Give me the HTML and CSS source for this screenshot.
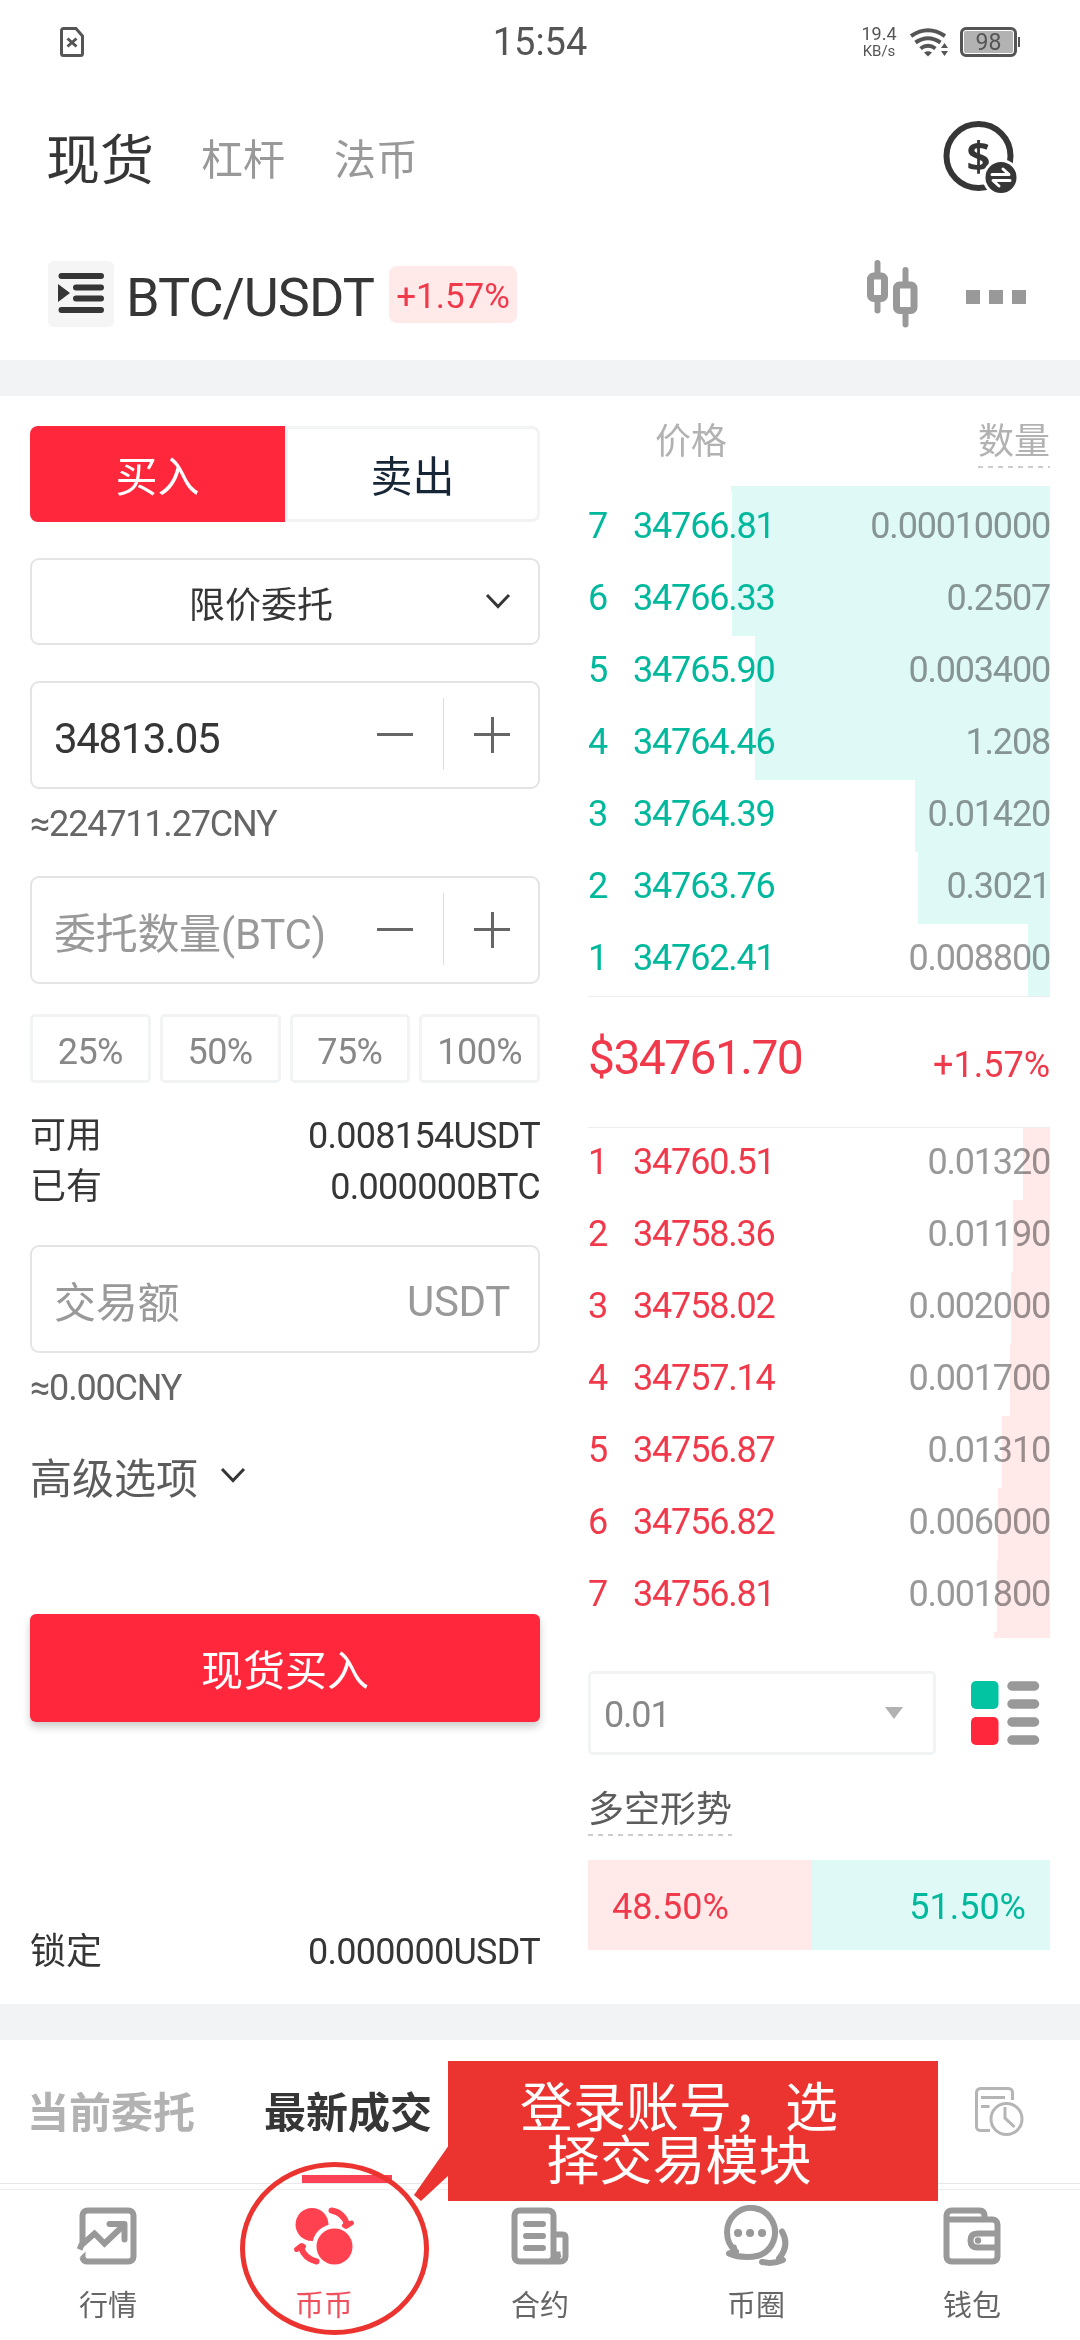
FILE: index.html
```html
<!DOCTYPE html>
<html lang="zh-CN">
  <head>
    <meta charset="utf-8">
    <title>现货交易</title>
    <meta name="viewport" content="width=device-width">
    <link rel="stylesheet" href="styles.css">
  </head>
  <body>
    <div class="status">
      <svg class="sim" width="24" height="30" viewBox="0 0 24 30" fill="none" stroke="#555" stroke-width="3">
        <path d="M3.5 1.5H16L22.500 9V26.500A2 2 0 0 1 20.500 28.500H3.500A2 2 0 0 1 1.500 26.500V3.500A2 2 0 0 1 3.500 1.500Z"/>
        <path d="M7.500 11.500L16.500 19.500M16.500 11.500L7.500 19.500"/>
      </svg>
      <div class="clock">15:54</div>
      <div class="speed"><b>19.4</b><span>KB/s</span></div>
      <svg class="wifi" width="39" height="29" viewBox="0 0 39 29" fill="none" stroke="#555" stroke-width="4">
        <path d="M1 8Q18 -3.500 35 8M5.500 14.500Q18 6 30.500 14.500M10.500 20.500Q18 15 25.500 20.500"/>
        <path d="M14 24.500Q18 22 22 24.500L18 28.500Z" fill="#555" stroke="none"/>
        <path d="M31 20L34.500 15L38 20ZM31 23H38L34.500 28Z" fill="#555" stroke="none"/>
      </svg>
      <div class="battery">98</div>
    </div>

    <div class="market-tabs">
      <span class="on">现货</span>
      <span>杠杆</span>
      <span>法币</span>
      <svg width="76" height="76" viewBox="0 0 76 76">
        <circle cx="35.500" cy="36" r="32" fill="none" stroke="#363636" stroke-width="6"/>
        <text class="dollar" x="35.500" y="51" text-anchor="middle">$</text>
        <circle cx="58" cy="57.500" r="18.500" fill="#fff"/>
        <circle cx="58" cy="57.500" r="15.500" fill="#363636"/>
        <path d="M49 54.500H66L60 49M67 60.500H50L56 66" fill="none" stroke="#fff" stroke-width="3" stroke-linecap="round" stroke-linejoin="round"/>
      </svg>
    </div>

    <div class="pair">
      <span class="menu">
        <svg width="66" height="66" viewBox="0 0 66 66" fill="none" stroke="#363636" stroke-width="6" stroke-linecap="round">
          <path d="M13.500 15H53M28 26.500H53M28 37.500H53M13.500 49H53"/>
          <path d="M10 23L22 32L10 41Z" fill="#363636" stroke="none"/>
        </svg>
      </span>
      <h1>BTC/USDT</h1>
      <span class="change">+1.57%</span>
      <svg class="candles" width="52" height="68" viewBox="0 0 52 68" fill="none" stroke="#999" stroke-width="7">
        <rect x="3.500" y="16" width="14" height="22.500" rx="3"/>
        <rect x="29.500" y="25" width="17.500" height="25.500" rx="3"/>
        <path d="M10.500 3V13M10.500 41V50.500M38.500 10V22M38.500 53V64.500" stroke-width="6" stroke-linecap="round"/>
      </svg>
      <span class="more"><i></i><i></i><i></i></span>
    </div>

    <div class="trade">
      <div class="order">
        <div class="side">
          <button class="buy">买入</button>
          <button class="sell">卖出</button>
        </div>
        <div class="box type">
          <span>限价委托</span>
          <svg width="26" height="17" viewBox="0 0 26 17"><path d="M2 2L13 13.500L24 2"/></svg>
        </div>
        <div class="box price">
          <span class="num val">34813.05</span>
          <span class="step"><i class="minus"></i></span>
          <span class="step plus"><i class="minus"></i></span>
        </div>
        <p class="approx num">≈224711.27CNY</p>
        <div class="box amount">
          <span class="val hint">委托数量(BTC)</span>
          <span class="step"><i class="minus"></i></span>
          <span class="step plus"><i class="minus"></i></span>
        </div>
        <div class="percent">
          <span>25%</span><span>50%</span><span>75%</span><span>100%</span>
        </div>
        <dl class="balance">
          <dt>可用</dt><dd>0.008154USDT</dd>
          <dt>已有</dt><dd>0.000000BTC</dd>
        </dl>
        <div class="box total">
          <span class="val hint">交易额</span>
          <span class="hint unit">USDT</span>
        </div>
        <p class="approx num">≈0.00CNY</p>
        <div class="advanced">
          高级选项
          <svg width="26" height="17" viewBox="0 0 26 17"><path d="M2 2L13 13.500L24 2"/></svg>
        </div>
        <button class="submit">现货买入</button>
        <dl class="balance locked">
          <dt>锁定</dt><dd>0.000000USDT</dd>
        </dl>
      </div>

      <div class="book">
        <div class="book-head"><span>价格</span><span class="dashed">数量</span></div>
        <ul class="asks num">
          <li class="cut"><i style="width:319px"></i></li>
          <li><i style="width:318px"></i><b>7</b><em>34766.81</em><span>0.00010000</span></li>
          <li><i style="width:318px"></i><b>6</b><em>34766.33</em><span>0.2507</span></li>
          <li><i style="width:295px"></i><b>5</b><em>34765.90</em><span>0.003400</span></li>
          <li><i style="width:295px"></i><b>4</b><em>34764.46</em><span>1.208</span></li>
          <li><i style="width:135px"></i><b>3</b><em>34764.39</em><span>0.01420</span></li>
          <li><i style="width:132px"></i><b>2</b><em>34763.76</em><span>0.3021</span></li>
          <li><i style="width:22px"></i><b>1</b><em>34762.41</em><span>0.008800</span></li>
        </ul>
        <div class="last"><strong class="num">$34761.70</strong><span>+1.57%</span></div>
        <ul class="bids num">
          <li><i style="width:27px"></i><b>1</b><em>34760.51</em><span>0.01320</span></li>
          <li><i style="width:37px"></i><b>2</b><em>34758.36</em><span>0.01190</span></li>
          <li><i style="width:39px"></i><b>3</b><em>34758.02</em><span>0.002000</span></li>
          <li><i style="width:40px"></i><b>4</b><em>34757.14</em><span>0.001700</span></li>
          <li><i style="width:48px"></i><b>5</b><em>34756.87</em><span>0.01310</span></li>
          <li><i style="width:52px"></i><b>6</b><em>34756.82</em><span>0.006000</span></li>
          <li><i style="width:53px"></i><b>7</b><em>34756.81</em><span>0.001800</span></li>
          <li class="cut"><i style="width:56px"></i></li>
        </ul>
        <div class="depth">
          <span class="merge num">0.01</span>
          <svg width="69" height="64" viewBox="0 0 69 64">
            <rect width="27.500" height="28" rx="5" fill="#02c4a3"/>
            <rect y="36" width="27.500" height="28" rx="5" fill="#ff273c"/>
            <path d="M41 5H63.500M41 23H63.500M41 41H63.500M41 59H63.500" stroke="#999" stroke-width="9.500" stroke-linecap="round"/>
          </svg>
        </div>
        <div class="trend-title"><span class="dashed">多空形势</span></div>
        <div class="trend">
          <span class="long" style="width:48.5%">48.50%</span>
          <span class="short" style="width:51.5%">51.50%</span>
        </div>
      </div>
    </div>

    <div class="list-tabs">
      <span>当前委托</span>
      <span class="on">最新成交</span>
      <svg width="50" height="50" viewBox="0 0 50 50" fill="none" stroke="#b5b5b5" stroke-width="3">
        <path d="M37.500 13V5.500A4 4 0 0 0 33.500 1.500H5.500A4 4 0 0 0 1.500 5.500V39.500A4 4 0 0 0 5.500 43.500H15"/>
        <path d="M6 10.500H30M6 19.500H14.500"/>
        <circle cx="31.500" cy="32" r="15.500"/>
        <path d="M30 20V31L39.500 40"/>
      </svg>
    </div>

    <div class="nav">
      <a>
        <svg width="70" height="62" viewBox="-6.500 -2.500 70 62" fill="none" stroke="#999" stroke-width="6">
          <path d="M3 37V8A5 5 0 0 1 8 3H49A5 5 0 0 1 54 8V49A5 5 0 0 1 49 54H8Q4 54 3 50"/>
          <path d="M0 42L2 37.500L15 26L25 36L44 18"/>
          <path d="M30 16.500H45V32" stroke-linecap="round" stroke-linejoin="round"/>
          <path d="M0 50L6 44V51Z" fill="#999" stroke="none"/>
        </svg>
        行情
      </a>
      <a class="on">
        <svg width="70" height="62" viewBox="-5.500 -2.500 70 62">
          <circle cx="17.500" cy="17" r="16.500" fill="#ff4150"/>
          <circle cx="40" cy="39" r="22.500" fill="#fff"/>
          <circle cx="40" cy="39" r="18" fill="#ff4150"/>
          <path d="M37 3Q49 5 52.500 17M22 54Q10 51 6.500 40" fill="none" stroke="#ff4150" stroke-width="6" stroke-linecap="round"/>
          <path d="M50 18L57 15.500L51.500 19ZM9 39L2 42L7 38Z" fill="#ff4150" stroke="#ff4150" stroke-width="5" stroke-linejoin="round"/>
        </svg>
        币币
      </a>
      <a>
        <svg width="70" height="62" viewBox="-6.500 -2.500 70 62" fill="none" stroke="#999" stroke-width="6">
          <rect x="3" y="3" width="39" height="51" rx="5"/>
          <path d="M42 27H51Q54 27 54 30V49A5 5 0 0 1 49 54H38M48 51Q46 49 46 44"/>
          <path d="M14.500 16.500H31.500M14.500 28.500H31.500M14.500 40.500H31.500" stroke-linecap="round"/>
        </svg>
        合约
      </a>
      <a>
        <svg width="70" height="62" viewBox="-2 -0.500 70 62" fill="none" stroke="#999" stroke-width="6" stroke-linecap="round" stroke-linejoin="round">
          <path d="M13 46A24 24.500 0 1 1 36 50Q20 54 6 48Q12 47 11 42"/>
          <path d="M59 26Q67 40 56 53L60 54.500Q50 59 39 56.500"/>
          <path d="M15 27.500h.1M27 27.500h.1M39 27.500h.1" stroke-width="8"/>
        </svg>
        币圈
      </a>
      <a>
        <svg width="70" height="62" viewBox="-6.500 -2.500 70 62" fill="none" stroke="#999" stroke-width="6">
          <path d="M3 12V8A5 5 0 0 1 8 3H36Q41 3 41 9M3 12H49A5 5 0 0 1 54 17V49A5 5 0 0 1 49 54H8A5 5 0 0 1 3 49Z"/>
          <path d="M54 26H34Q27 26 27 33Q27 40 34 40H54"/>
          <circle cx="34.500" cy="33" r="3.200" fill="#999" stroke="none"/>
        </svg>
        钱包
      </a>
    </div>

    <!-- guide overlay -->
    <div class="ring"></div>
    <svg class="tail" width="36" height="56" viewBox="0 0 36 56"><path d="M36 0L1 50L8 56L36 30Z"/></svg>
    <div class="tip">登录账号，选<br>择交易模块</div>
  </body>
</html>
```

FILE: styles.css
```css
* {
    box-sizing: border-box;
}
body {
    position: relative;
    width: 1080px;
    height: 2340px;
    margin: 0;
    overflow: hidden;
    background: #fff;
    color: #363636;
    font-family: Roboto, "Noto Sans CJK SC", sans-serif;
    font-size: 36px;
}
svg {
    display: block;
    flex: none;
}
ul, dl, dd, p, h1 {
    margin: 0;
    padding: 0;
    list-style: none;
}
b, em, i, strong {
    font-weight: inherit;
    font-style: normal;
}
button {
    padding: 0;
    border: 0;
    font: inherit;
    font-size: 42px;
}
.num {
    letter-spacing: -0.033em;
}

/* status bar */
.status {
    display: flex;
    align-items: center;
    height: 84px;
    padding: 0 60px;
    color: #555;
}
.clock {
    width: 100px;
    margin-left: 406px;
    text-align: center;
    font-size: 38px;
}
.speed {
    width: 38px;
    margin-left: 270px;
    text-align: center;
    white-space: nowrap;
    font-size: 15px;
    line-height: 14px;
}
.speed b {
    display: block;
    margin-bottom: 3px;
    font-size: 18px;
}
.wifi {
    margin-left: 12px;
}
.battery {
    position: relative;
    width: 57px;
    height: 30px;
    margin-left: 11px;
    border: 3px solid #555;
    border-radius: 6px;
    background: #b2b2b2;
    box-shadow: inset 0 0 0 1px #fff;
    text-align: center;
    font-size: 23px;
    line-height: 25px;
}
.battery::after {
    content: "";
    position: absolute;
    right: -6px;
    top: 7px;
    width: 2px;
    height: 10px;
    background: #555;
}

.market-tabs {
    display: flex;
    align-items: center;
    height: 148px;
    padding: 0 57px 0 46px;
    color: #999;
    font-size: 42px;
}
.market-tabs span {
    margin: -4px 49px 0 0;
}
.market-tabs .on {
    margin-right: 47px;
    color: #363636;
    font-size: 54px;
}
.market-tabs svg {
    margin-left: auto;
    margin-right: 4px;
}
.dollar {
    fill: #363636;
    font: bold 42px "Open Sans", sans-serif;
}

.pair {
    display: flex;
    align-items: center;
    height: 128px;
    padding: 0 54px 4px 48px;
}
.menu {
    border-radius: 6px;
    background: #f5f5f5;
}
.pair h1 {
    width: 259px;
    margin: 6px 0 0 12px;
    font-size: 54px;
    font-weight: 400;
    letter-spacing: -1px;
}
.change {
    width: 128px;
    height: 57px;
    margin-left: 4px;
    border-radius: 8px;
    background: #ffe9e9;
    color: #f0394a;
    text-align: center;
    font-size: 35px;
    line-height: 62px;
}
.candles {
    margin-left: auto;
}
.more {
    display: flex;
    gap: 9px;
    margin: 6px 0 0 47px;
}
.more i {
    width: 14px;
    height: 14px;
    background: #999;
}

.trade {
    display: flex;
    justify-content: space-between;
    height: 1680px;
    padding: 30px 30px 0;
    border: solid #f1f3f5;
    border-width: 36px 0;
}

/* order form */
.order {
    width: 510px;
}
.side {
    display: flex;
    height: 96px;
    margin-bottom: 36px;
}
.side button {
    width: 50%;
    padding-bottom: 2px;
}
.side .buy {
    border-radius: 8px 0 0 8px;
    background: #ff273c;
    color: #fff;
}
.side .sell {
    border: 3px solid #f1f3f5;
    border-radius: 0 8px 8px 0;
    background: #fff;
    color: #172636;
}
.box {
    display: flex;
    align-items: center;
    height: 108px;
    border: 2px solid #e4e4e4;
    border-radius: 9px;
    font-size: 42px;
}
.box svg, .advanced svg {
    fill: none;
    stroke: #363636;
    stroke-width: 3;
}
.type {
    height: 87px;
    margin-bottom: 36px;
    padding-right: 27px;
    font-size: 36px;
}
.type span {
    flex: 1;
    padding-left: 5px;
    text-align: center;
}
.val {
    flex: 1;
    padding: 6px 0 0 22px;
    white-space: nowrap;
}
.hint {
    padding-top: 0;
    color: #999;
    letter-spacing: -.3px;
}
.unit {
    padding: 4px 28px 0 0;
}
.step {
    display: flex;
    align-items: center;
    justify-content: center;
    width: 97px;
    height: 72px;
    margin-top: -2px;
}
.step.plus {
    width: 95px;
    padding-left: 2px;
}
.minus {
    width: 36px;
    height: 3px;
    background: #666;
}
.plus {
    border-left: 1px solid #ddd;
}
.plus .minus::after {
    content: "";
    display: block;
    width: 3px;
    height: 36px;
    margin: -16px auto 0;
    background: #666;
}
.approx {
    height: 87px;
    padding-top: 14px;
    color: #666;
    line-height: 42px;
}
.percent {
    display: grid;
    grid-template-columns: repeat(4, 1fr);
    gap: 9px;
    margin: 30px 0 26px;
    color: #888;
    letter-spacing: -.6px;
}
.percent span {
    height: 69px;
    border: 3px solid #f1f3f5;
    border-radius: 5px;
    text-align: center;
    line-height: 70px;
}
.balance {
    display: grid;
    grid-template-columns: auto auto;
    justify-content: space-between;
    height: 136px;
    padding-top: 2px;
    line-height: 51px;
    align-content: start;
}
.balance dd {
    text-align: right;
    letter-spacing: -.7px;
}
.advanced {
    display: flex;
    align-items: center;
    gap: 22px;
    height: 70px;
    margin-bottom: 104px;
    color: #5c5c5c;
    font-size: 42px;
}
.submit {
    display: block;
    width: 510px;
    height: 108px;
    padding-bottom: 2px;
    border-radius: 6px;
    background: #ff273c;
    box-shadow: 0 5px 8px rgba(0, 0, 0, .2);
    color: #fff;
}
.locked {
    margin-top: 203px;
}

/* order book */
.book {
    width: 462px;
}
.book-head {
    display: flex;
    justify-content: space-between;
    height: 60px;
    padding-left: 67px;
    color: #b2b2b2;
    line-height: 32px;
}
.dashed {
    display: inline-block;
    height: 42px;
    background: repeating-linear-gradient(90deg, #ccc 0 5px, transparent 5px 10px) 0 100% / 100% 2px no-repeat;
}
.book li {
    position: relative;
    display: flex;
    height: 72px;
    line-height: 69px;
}
.book li.cut {
    height: 6px;
}
.book li i {
    position: absolute;
    top: 0;
    right: 0;
    height: 100%;
    background: #dff9f6;
}
.book .bids i {
    background: #ffe9e9;
}
.book li b {
    position: relative;
    width: 45px;
}
.book li em {
    position: relative;
}
.book li span {
    position: relative;
    margin-left: auto;
    color: #999;
    mix-blend-mode: multiply;
}
.asks {
    color: #00b89c;
}
.bids, .last {
    color: #f0394a;
}
.last {
    display: flex;
    justify-content: space-between;
    height: 132px;
    border: solid #eee;
    border-width: 1px 0;
}
.last strong {
    font-size: 48px;
    line-height: 122px;
}
.last span {
    line-height: 136px;
}
.depth {
    display: flex;
    align-items: center;
    justify-content: space-between;
    height: 84px;
    margin-top: 33px;
}
.merge {
    display: flex;
    align-items: center;
    justify-content: space-between;
    width: 348px;
    height: 84px;
    padding: 3px 30px 0 13px;
    border: 3px solid #f1f3f5;
    border-radius: 5px;
    color: #888;
}
.merge::after {
    content: "";
    border: 9px solid transparent;
    border-top: 12px solid #b2b2b2;
    border-bottom: 0;
    margin-top: -4px;
}
.depth svg {
    margin-right: 10px;
}
.trend-title {
    height: 72px;
    margin-top: 33px;
    color: #5c5c5c;
    line-height: 44px;
}
.trend-title .dashed {
    height: 48px;
}
.trend {
    display: flex;
    height: 90px;
    line-height: 95px;
}
.long {
    padding-left: 24px;
    background: #ffe9e9;
    color: #f0394a;
}
.short {
    padding-right: 24px;
    background: #dff9f6;
    color: #00b89c;
    text-align: right;
}

.list-tabs {
    display: flex;
    height: 144px;
    padding-left: 27px;
    border-bottom: 1px solid #e8e8e8;
    color: #b2b2b2;
    font-size: 42px;
    font-weight: 700;
    line-height: 148px;
}
.list-tabs .on {
    position: relative;
    margin-left: 69px;
    color: #363636;
}
.list-tabs .on::after {
    content: "";
    position: absolute;
    left: 38px;
    bottom: 0;
    width: 90px;
    height: 8px;
    background: #fb4155;
}
.list-tabs svg {
    margin: 47px 55px 0 auto;
}

.nav {
    display: flex;
    height: 151px;
    margin-top: 5px;
    padding-top: 15px;
    border-top: 1px solid #eee;
    color: #666;
    font-size: 29px;
}
.nav a {
    display: flex;
    flex: 1;
    flex-direction: column;
    align-items: center;
    line-height: 42px;
}
.nav svg {
    margin-bottom: 18px;
}
.nav .on {
    color: #f0505c;
}

.ring {
    position: absolute;
    left: 240px;
    top: 2162px;
    width: 189px;
    height: 173px;
    border: 5px solid #eb3430;
    border-radius: 50%;
}
.tail {
    position: absolute;
    left: 413px;
    top: 2145px;
    fill: #eb3430;
}
.tip {
    position: absolute;
    left: 448px;
    top: 2061px;
    width: 490px;
    height: 140px;
    padding: 22px 28px 0 0;
    background: #eb3430;
    color: #fff;
    text-align: center;
    font-size: 53px;
    line-height: 53px;
}
```
